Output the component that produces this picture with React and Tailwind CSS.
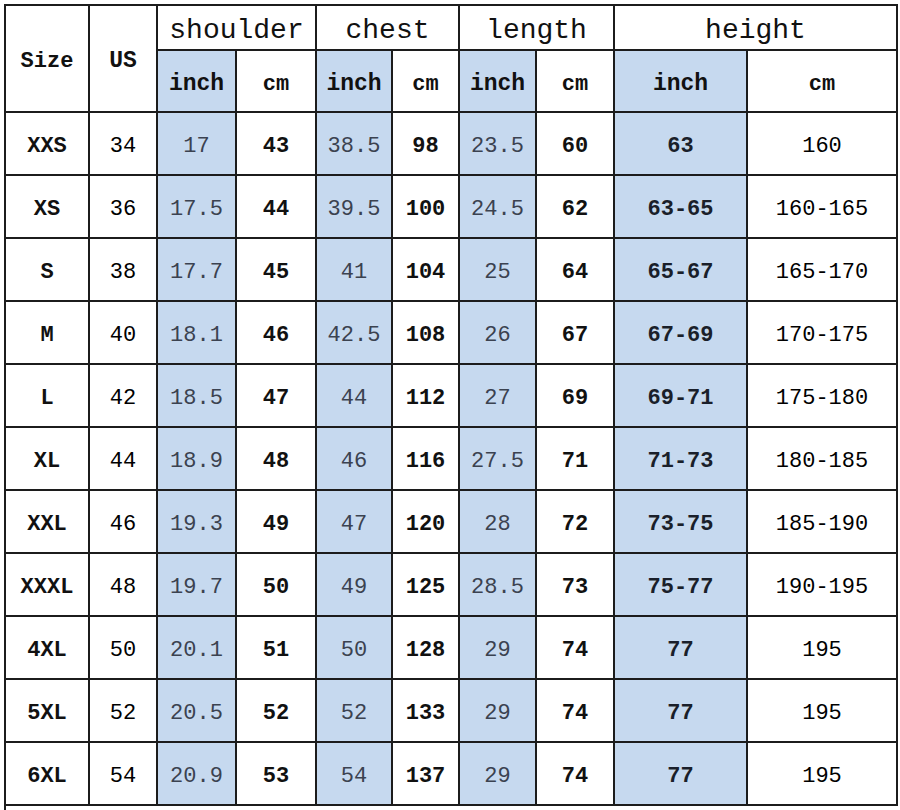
import React from 'react';

const rows = [
  ['XXS', '34', '17', '43', '38.5', '98', '23.5', '60', '63', '160'],
  ['XS', '36', '17.5', '44', '39.5', '100', '24.5', '62', '63-65', '160-165'],
  ['S', '38', '17.7', '45', '41', '104', '25', '64', '65-67', '165-170'],
  ['M', '40', '18.1', '46', '42.5', '108', '26', '67', '67-69', '170-175'],
  ['L', '42', '18.5', '47', '44', '112', '27', '69', '69-71', '175-180'],
  ['XL', '44', '18.9', '48', '46', '116', '27.5', '71', '71-73', '180-185'],
  ['XXL', '46', '19.3', '49', '47', '120', '28', '72', '73-75', '185-190'],
  ['XXXL', '48', '19.7', '50', '49', '125', '28.5', '73', '75-77', '190-195'],
  ['4XL', '50', '20.1', '51', '50', '128', '29', '74', '77', '195'],
  ['5XL', '52', '20.5', '52', '52', '133', '29', '74', '77', '195'],
  ['6XL', '54', '20.9', '53', '54', '137', '29', '74', '77', '195'],
];

// per column: background + text style
const cellStyles = [
  'bg-white font-bold text-[#111]',
  'bg-white text-[#000]',
  'bg-[#c6d9ef] text-[#3b4250]',
  'bg-white font-bold text-[#111]',
  'bg-[#c6d9ef] text-[#3b4250]',
  'bg-white font-bold text-[#111]',
  'bg-[#c6d9ef] text-[#3b4250]',
  'bg-white font-bold text-[#111]',
  'bg-[#c6d9ef] font-bold text-[#1a1f2a]',
  'bg-white text-[#000]',
];

const cell = 'flex items-center justify-center pt-[6px]';

export default function App() {
  return (
    <div className="w-[900px] h-[810px] bg-white pt-1 pl-1" style={{ fontFamily: '"Liberation Mono", "DejaVu Sans Mono", monospace' }}>
      <div className="grid w-[894px] bg-[#1c1c1c] p-[2px] gap-[2px] grid-cols-[82px_66px_77px_78px_74px_65px_75px_76px_131px_148px] grid-rows-[43px_60px_repeat(11,61px)] text-[22px]">
        <div className={`${cell} row-span-2 bg-white font-bold text-[#111] text-[22px]`}>Size</div>
        <div className={`${cell} row-span-2 bg-white font-bold text-[#111] text-[23px]`}>US</div>
        <div className={`${cell} col-span-2 bg-white text-[#111] text-[28px]`}>shoulder</div>
        <div className={`${cell} col-span-2 bg-white text-[#111] text-[28px]`}>chest</div>
        <div className={`${cell} col-span-2 bg-white text-[#111] text-[28px]`}>length</div>
        <div className={`${cell} col-span-2 bg-white text-[#111] text-[28px]`}>height</div>
        {[0, 1, 2, 3].map((i) => (
          <React.Fragment key={i}>
            <div className={`${cell} bg-[#c6d9ef] font-bold text-[#111] text-[23px]`}>inch</div>
            <div className={`${cell} bg-white font-bold text-[#111] text-[22px]`}>cm</div>
          </React.Fragment>
        ))}
        {rows.map((row) =>
          row.map((v, j) => (
            <div key={row[0] + j} className={`${cell} ${cellStyles[j]}`}>
              {v}
            </div>
          ))
        )}
      </div>
      <div className="h-1 w-[894px] border-l-2 border-[#1c1c1c]" />
    </div>
  );
}
